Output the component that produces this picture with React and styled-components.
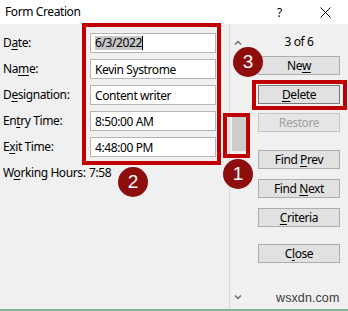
import React from "react";
import styled, { createGlobalStyle } from "styled-components";

const Global = createGlobalStyle`
  html, body { margin: 0; padding: 0; background: #f0f0f0; }
  body { font-family: "Segoe UI", "Noto Sans", "Open Sans", sans-serif; font-size: 12px; color: #000; letter-spacing: -0.4px; }
`;

const Window = styled.div`
  position: relative;
  width: 348px;
  height: 311px;
  background: #f0f0f0;
  overflow: hidden;
  display: flex;
  flex-direction: column;
  box-sizing: border-box;
  border-bottom: 2px solid #7fb896;
`;

const TitleBar = styled.div`
  height: 24px;
  background: #fff;
  display: flex;
  align-items: center;
  padding-left: 5px;
  flex-shrink: 0;
`;

const Title = styled.span`
  font-size: 12px;
  flex: 1;
  line-height: 16px;
`;

const Help = styled.span`
  width: 45px;
  text-align: center;
  font-size: 12px;
`;

const CloseX = styled.div`
  width: 46px;
  display: flex;
  justify-content: center;
  align-items: center;
`;

const Body = styled.div`
  flex: 1;
  display: flex;
`;

const LeftPane = styled.div`
  width: 229px;
  padding: 9px 0 0 3px;
  box-sizing: border-box;
`;

const FormGrid = styled.div`
  display: grid;
  grid-template-columns: 87px 126px;
  row-gap: 6px;
  align-items: center;
`;

const Label = styled.span`
  line-height: 20px;
  white-space: nowrap;
`;

const U = styled.span`
  text-decoration: underline;
  text-underline-offset: 2px;
`;

const Field = styled.div`
  height: 20px;
  box-sizing: border-box;
  background: #fff;
  border: 1px solid #b4b4b4;
  padding-left: 4px;
  display: flex;
  align-items: center;
  white-space: nowrap;
`;

const Selected = styled.span`
  background: #c8c8c8;
  line-height: 14px;
`;

const Caret = styled.span`
  display: inline-block;
  width: 1px;
  height: 14px;
  background: #000;
`;

const HoursRow = styled.div`
  margin-top: 8px;
  display: grid;
  grid-template-columns: 86px auto;
  line-height: 16px;
  white-space: nowrap;
`;

const ScrollCol = styled.div`
  width: 17px;
  border-left: 1px solid #dadada;
  display: flex;
  flex-direction: column;
  align-items: center;
  box-sizing: border-box;
  padding: 16px 0 9px;
`;

const Thumb = styled.div`
  width: 15px;
  height: 34px;
  background: #cdcdcd;
  margin-top: 72px;
  margin-left: 2px;
`;

const Spacer = styled.div`
  flex: 1;
`;

const RightPane = styled.div`
  padding: 10px 0 0 12px;
  display: flex;
  flex-direction: column;
  width: 82px;
`;

const Counter = styled.div`
  text-align: center;
  line-height: 16px;
  height: 16px;
  margin-bottom: 6px;
`;

const Btn = styled.div`
  height: 19px;
  box-sizing: border-box;
  width: 82px;
  margin-top: ${(p) => p.$mt || 0}px;
  background: ${(p) => (p.$disabled ? "#e6e6e6" : "#e1e1e1")};
  border: 1px solid ${(p) => (p.$disabled ? "#c4c4c4" : p.$focus ? "#7a7a7a" : "#adadad")};
  color: ${(p) => (p.$disabled ? "#a0a0a0" : "#000")};
  text-align: center;
  line-height: 17px;
  white-space: nowrap;
`;

const Watermark = styled.div`
  position: absolute;
  left: 276px;
  top: 291px;
  font-family: "Liberation Sans", Arial, sans-serif;
  font-size: 12.5px;
  color: #3a3a3a;
  letter-spacing: 0.1px;
`;

const RedBox = styled.div`
  position: absolute;
  box-sizing: border-box;
  border: 4px solid #c00000;
  left: ${(p) => p.$x}px;
  top: ${(p) => p.$y}px;
  width: ${(p) => p.$w}px;
  height: ${(p) => p.$h}px;
`;

const Badge = styled.div`
  position: absolute;
  width: 30px;
  height: 30px;
  border-radius: 50%;
  background: #8e0e0e;
  color: #fff;
  font-family: "Liberation Sans", Arial, sans-serif;
  font-size: 19px;
  letter-spacing: 0;
  display: flex;
  align-items: center;
  justify-content: center;
  left: ${(p) => p.$cx - 15}px;
  top: ${(p) => p.$cy - 15}px;
`;

const Chevron = ({ up }) => (
  <svg width="8" height="5" viewBox="0 0 8 5">
    <path
      d={up ? "M1 4.5 L4 1.5 L7 4.5" : "M1 0.5 L4 3.5 L7 0.5"}
      fill="none"
      stroke="#6a6a6a"
      strokeWidth="1.4"
    />
  </svg>
);

export default function App() {
  return (
    <>
      <Global />
      <Window>
        <TitleBar>
          <Title>Form Creation</Title>
          <Help>?</Help>
          <CloseX>
            <svg width="11" height="11" viewBox="0 0 11 11">
              <path d="M0.5 0.5 L10.5 10.5 M10.5 0.5 L0.5 10.5" stroke="#000" strokeWidth="1" />
            </svg>
          </CloseX>
        </TitleBar>
        <Body>
          <LeftPane>
            <FormGrid>
              <Label>D<U>a</U>te:</Label>
              <Field>
                <Selected>6/3/2022</Selected>
                <Caret />
              </Field>
              <Label>Na<U>m</U>e:</Label>
              <Field>Kevin Systrome</Field>
              <Label>D<U>e</U>signation:</Label>
              <Field>Content writer</Field>
              <Label>En<U>t</U>ry Time:</Label>
              <Field>8:50:00 AM</Field>
              <Label>E<U>x</U>it Time:</Label>
              <Field>4:48:00 PM</Field>
            </FormGrid>
            <HoursRow>
              <span>W<U>o</U>rking Hours:</span>
              <span>7:58</span>
            </HoursRow>
          </LeftPane>
          <ScrollCol>
            <Chevron up />
            <Thumb />
            <Spacer />
            <Chevron />
          </ScrollCol>
          <RightPane>
            <Counter>3 of 6</Counter>
            <Btn>Ne<U>w</U></Btn>
            <Btn $mt={10} $focus><U>D</U>elete</Btn>
            <Btn $mt={9} $disabled>Restore</Btn>
            <Btn $mt={18}>Find <U>P</U>rev</Btn>
            <Btn $mt={10}>Find <U>N</U>ext</Btn>
            <Btn $mt={10}><U>C</U>riteria</Btn>
            <Btn $mt={17}>C<U>l</U>ose</Btn>
          </RightPane>
        </Body>
        <Watermark>wsxdn.com</Watermark>
        <RedBox $x={82} $y={23} $w={139} $h={142} />
        <RedBox $x={252} $y={80} $w={95} $h={30} />
        <RedBox $x={223} $y={113} $w={27} $h={45} />
        <Badge $cx={133} $cy={182}>2</Badge>
        <Badge $cx={248} $cy={62}>3</Badge>
        <Badge $cx={238} $cy={174}>1</Badge>
      </Window>
    </>
  );
}
